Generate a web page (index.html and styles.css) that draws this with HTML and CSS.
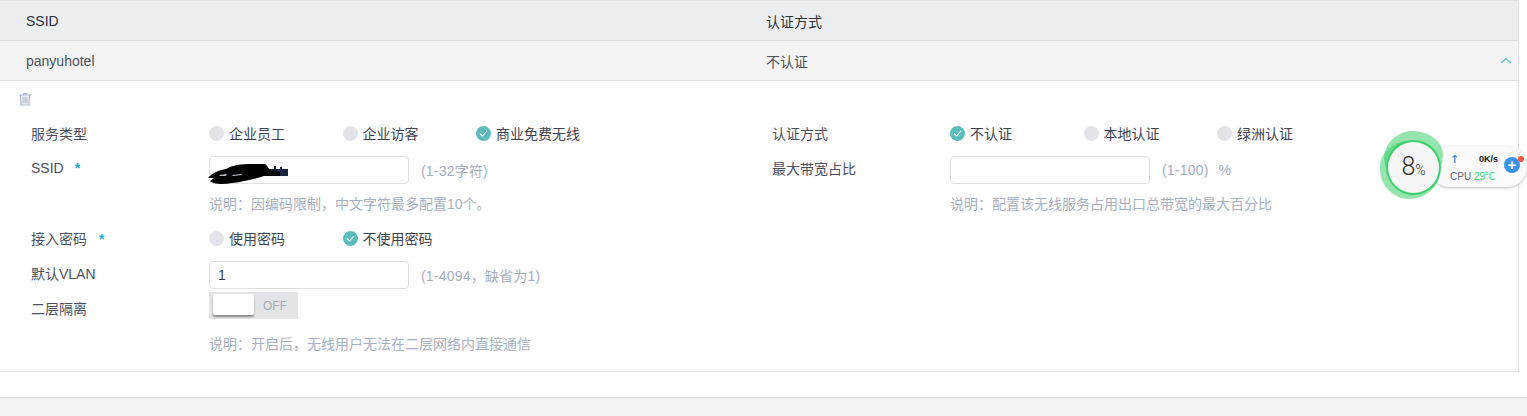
FILE: index.html
```html
<!DOCTYPE html>
<html lang="en">

<head>
    <meta charset="UTF-8">
    <meta name="viewport" content="width=device-width, initial-scale=1.0">
    <title>SSID</title>
    <link rel="stylesheet" href="styles.css">
</head>

<body>
    <div class="table">
        <div class="table-row table-head">
            <div class="cell-ssid">SSID</div>
            <div class="cell-auth">认证方式</div>
        </div>
        <div class="table-row table-item">
            <div class="cell-ssid">panyuhotel</div>
            <div class="cell-auth">不认证</div>
            <svg class="arrow" width="12" height="7" viewBox="0 0 12 7"><path d="M1 6 L6 1.5 L11 6" fill="none" stroke="#5bc4c4" stroke-width="1.3"/></svg>
        </div>
        <div class="panel">
            <svg class="trash" width="14" height="14" viewBox="0 0 14 14">
                <path d="M1 3 H13 M5.5 3 V1.5 H8.5 V3 M2.5 3 L3 13 H11 L11.5 3 M5 4.5 V11.5 M7 4.5 V11.5 M9 4.5 V11.5" fill="none" stroke="#aab3c4" stroke-width="1.2"/>
            </svg>
            <div class="form">
                <!-- 左列 -->
                <div class="col">
                    <div class="row row-radio">
                        <label class="label">服务类型</label>
                        <div class="options">
                            <span class="radio opt-134"><i class="dot"></i>企业员工</span>
                            <span class="radio opt-134"><i class="dot"></i>企业访客</span>
                            <span class="radio"><i class="dot on"><svg width="9" height="7" viewBox="0 0 9 7"><path d="M1 3.5 L3.5 6 L8 1" fill="none" stroke="#fff" stroke-width="1.1"/></svg></i>商业免费无线</span>
                        </div>
                    </div>
                    <div class="row row-input">
                        <label class="label">SSID<em class="star star-ssid">*</em></label>
                        <div class="input-wrap">
                            <input class="input" type="text">
                            <svg class="scribble" width="82" height="22" viewBox="0 0 82 22">
                                <path d="M61 6 H66 V3 H68 V6 H72 V4 H74 V6 H80 V13 H70 L60 12 Z" fill="#1c2340"/>
                                <path d="M0 15 C5 9 12 7 18 6 C24 2 34 1 44 1 L57 1 C60 3 60 5 62 7 L72 9 L72 13 L56 13 C46 16 36 19 24 20 C14 22 5 21 2 18 L6 15 Z" fill="#000"/>
                                <path d="M11 12 L19 11 L18 13 L12 13 Z M24 12 L34 11 L34 12 L25 13 Z" fill="#b8bcc4"/>
                            </svg>
                        </div>
                        <span class="hint">(1-32字符)</span>
                    </div>
                    <div class="help help-first">说明：因编码限制，中文字符最多配置10个。</div>
                    <div class="row row-radio row-pass">
                        <label class="label">接入密码<em class="star">*</em></label>
                        <div class="options">
                            <span class="radio opt-134"><i class="dot"></i>使用密码</span>
                            <span class="radio"><i class="dot on"><svg width="9" height="7" viewBox="0 0 9 7"><path d="M1 3.5 L3.5 6 L8 1" fill="none" stroke="#fff" stroke-width="1.1"/></svg></i>不使用密码</span>
                        </div>
                    </div>
                    <div class="row row-input row-vlan">
                        <label class="label">默认VLAN</label>
                        <input class="input" type="text" value="1">
                        <span class="hint">(1-4094，缺省为1)</span>
                    </div>
                    <div class="row row-switch">
                        <label class="label">二层隔离</label>
                        <div class="switch"><span class="knob"></span><span class="off">OFF</span></div>
                    </div>
                    <div class="help help-last">说明：开启后，无线用户无法在二层网络内直接通信</div>
                </div>
                <!-- 右列 -->
                <div class="col">
                    <div class="row row-radio">
                        <label class="label">认证方式</label>
                        <div class="options">
                            <span class="radio opt-134"><i class="dot on"><svg width="9" height="7" viewBox="0 0 9 7"><path d="M1 3.5 L3.5 6 L8 1" fill="none" stroke="#fff" stroke-width="1.1"/></svg></i>不认证</span>
                            <span class="radio opt-134"><i class="dot"></i>本地认证</span>
                            <span class="radio"><i class="dot"></i>绿洲认证</span>
                        </div>
                    </div>
                    <div class="row row-input">
                        <label class="label">最大带宽占比</label>
                        <input class="input" type="text">
                        <span class="hint">(1-100)<span class="unit">%</span></span>
                    </div>
                    <div class="help help-first">说明：配置该无线服务占用出口总带宽的最大百分比</div>
                </div>
            </div>
        </div>
    </div>
    <div class="footer"></div>

    <!-- 悬浮球 -->
    <div class="widget">
        <div class="pill">
            <div class="pill-line"><span class="up">↑</span><span class="speed">0K/s</span></div>
            <div class="pill-line pill-cpu">CPU <span class="temp">29℃</span></div>
            <span class="plus">+</span>
            <span class="badge"></span>
        </div>
        <div class="blob blob-a"></div>
        <div class="blob blob-b"></div>
        <div class="ball">8<small>%</small></div>
    </div>
</body>

</html>
```

FILE: styles.css
```css
body {
    margin: 0;
    height: 416px;
    overflow: hidden;
    background-color: #fff;
    font-family: "Liberation Sans", "Noto Sans CJK SC", sans-serif;
    font-size: 14px;
    color: #4a5060;
}

/* 表格 */
.table {
    width: 1519px;
    height: 397px;
    border-top: 1px solid #dfe1e4;
    box-sizing: border-box;
}

.table-row {
    display: flex;
    align-items: center;
    position: relative;
    height: 40px;
    box-sizing: border-box;
    padding-left: 26px;
    border-bottom: 1px solid #dcdee0;
    border-right: 1px solid #dfe1e4;
}

.table-head {
    background-color: #ebeef1;
    color: #2b2f38;
}

.table-item {
    background-color: #f4f4f4;
}

.cell-ssid {
    width: 740px;
}

.arrow {
    position: absolute;
    right: 6px;
    top: 16px;
}

.panel {
    height: 291px;
    box-sizing: border-box;
    padding-top: 11px;
    border-bottom: 1px solid #e2e3e6;
    border-right: 1px solid #e2e3e6;
}

.trash {
    display: block;
    margin-left: 18px;
}

/* 表单 */
.form {
    display: flex;
    padding-left: 31px;
    margin-top: 17px;
}

.col {
    width: 741px;
}

.row {
    display: flex;
    align-items: center;
}

.label {
    width: 178px;
    flex-shrink: 0;
}

.row-input .label {
    margin-bottom: 4px;
}

.row-switch .label {
    margin-top: 4px;
}

.star {
    font-style: normal;
    font-weight: bold;
    color: #2ba8e0;
    margin-left: 12px;
}

.star-ssid {
    margin-left: 11px;
}

.options {
    display: flex;
}

.row-radio {
    height: 20px;
}

.radio {
    display: flex;
    align-items: center;
    color: #3d4250;
}

.opt-134 {
    width: 133.5px;
}

.dot {
    display: flex;
    align-items: center;
    justify-content: center;
    width: 15px;
    height: 15px;
    border-radius: 50%;
    background-color: #e3e4e9;
    margin-right: 5px;
}

.dot.on {
    background-color: #5cbcbc;
}

.row-input {
    margin-top: 13px;
    height: 28px;
}

.input-wrap {
    position: relative;
    height: 28px;
}

.input {
    display: block;
    width: 200px;
    height: 28px;
    box-sizing: border-box;
    border: 1px solid #dcdee2;
    border-radius: 4px;
    padding: 0 8px;
    font-family: inherit;
    font-size: 14px;
    color: #3b3a60;
    background-color: #fff;
    outline: none;
}

.scribble {
    position: absolute;
    left: -1px;
    top: 7px;
}

.hint {
    margin-left: 12px;
    color: #a3adbf;
    letter-spacing: 0.2px;
}

.unit {
    margin-left: 10px;
}

.help {
    margin-left: 178px;
    color: #a6b0c0;
    line-height: 20px;
}

.help-first {
    margin-top: 10px;
}

.row-pass {
    margin-top: 14px;
}

.row-vlan {
    margin-top: 13px;
}

.row-switch {
    margin-top: 3px;
    height: 27px;
}

.switch {
    display: flex;
    align-items: center;
    width: 89px;
    height: 27px;
    background-color: #e3e4e8;
    position: relative;
}

.knob {
    width: 41px;
    height: 21px;
    margin-left: 4px;
    background-color: #fff;
    border-radius: 2px;
    box-shadow: 0 2px 2px #8a8a8a;
    margin-top: -2px;
}

.off {
    margin-left: 9px;
    font-size: 12px;
    color: #a6aab3;
}

.help-last {
    margin-top: 15px;
}

.footer {
    height: 19px;
    background-color: #f3f3f3;
    border-top: 1px solid #dddddd;
}

/* 悬浮球 */
.widget {
    position: absolute;
    left: 1380px;
    top: 130px;
    width: 147px;
    height: 70px;
}

.pill {
    position: absolute;
    left: 50px;
    top: 16px;
    width: 97px;
    height: 41px;
    box-sizing: border-box;
    padding: 5px 0 0 20px;
    background-color: #fafafa;
    border-radius: 20px;
    box-shadow: 0 1px 3px rgba(0, 0, 0, 0.25);
    font-size: 10px;
}

.pill-line {
    display: flex;
    height: 16px;
    align-items: center;
    color: #5a6170;
}

.pill-cpu {
    margin-top: 2px;
    display: block;
    line-height: 16px;
}

.up {
    color: #3a8de8;
    font-family: "DejaVu Sans", sans-serif;
    font-size: 11px;
    font-weight: bold;
    width: 29px;
}

.speed {
    color: #111;
    font-size: 9px;
    font-weight: bold;
}

.temp {
    color: #2fd66f;
}

.plus {
    position: absolute;
    right: 7px;
    top: 11px;
    width: 16px;
    height: 16px;
    line-height: 15px;
    text-align: center;
    border-radius: 50%;
    background-color: #3a93f0;
    color: #fff;
    font-size: 15px;
    font-weight: bold;
}

.badge {
    position: absolute;
    right: 3px;
    top: 10px;
    width: 6px;
    height: 6px;
    border-radius: 50%;
    background-color: #f2553d;
}

.blob {
    position: absolute;
    background-color: rgba(62, 207, 108, 0.55);
}

.blob-a {
    left: 4px;
    top: 1px;
    width: 59px;
    height: 54px;
    border-radius: 48% 52% 46% 54% / 52% 44% 56% 48%;
}

.blob-b {
    left: 0;
    top: 11px;
    width: 60px;
    height: 58px;
    border-radius: 50% 46% 54% 50% / 46% 50% 50% 54%;
}

.ball {
    position: absolute;
    left: 8px;
    top: 12px;
    width: 51px;
    height: 51px;
    border-radius: 50%;
    background-color: #f5f5f5;
    box-shadow: 0 0 0 2px #3ed06e;
    text-align: center;
    line-height: 49px;
    font-family: Roboto, sans-serif;
    font-size: 25px;
    font-weight: 300;
    color: #333;
}

.ball small {
    font-size: 14px;
}
```
